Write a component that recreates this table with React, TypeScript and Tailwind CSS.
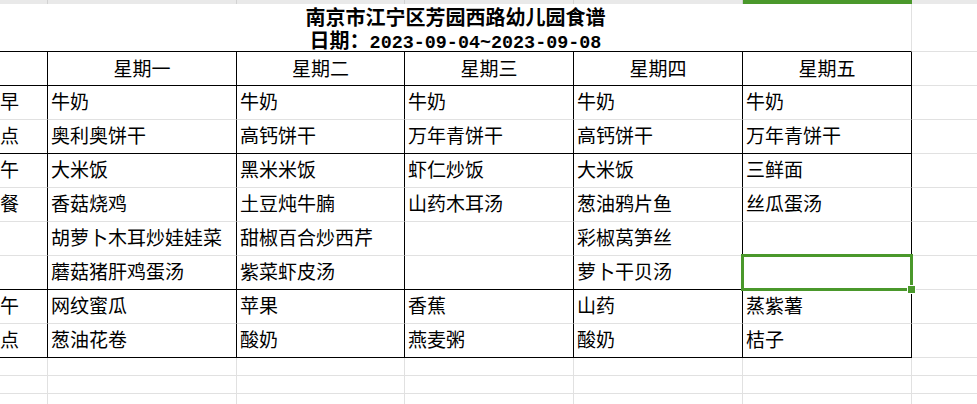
type Line = 'black' | 'gray';

const rightLine: Record<Line, string> = {
  black: 'border-r border-r-black',
  gray: 'border-r border-r-[#e1e1e1]',
};

const bottomLine: Record<Line, string> = {
  black: 'border-b border-b-black',
  gray: 'border-b border-b-[#e1e1e1]',
};

const days = ['星期一', '星期二', '星期三', '星期四', '星期五'];

const rows: { label: string; items: string[]; bottom: Line }[] = [
  { label: '早', items: ['牛奶', '牛奶', '牛奶', '牛奶', '牛奶'], bottom: 'gray' },
  { label: '点', items: ['奥利奥饼干', '高钙饼干', '万年青饼干', '高钙饼干', '万年青饼干'], bottom: 'black' },
  { label: '午', items: ['大米饭', '黑米米饭', '虾仁炒饭', '大米饭', '三鲜面'], bottom: 'gray' },
  { label: '餐', items: ['香菇烧鸡', '土豆炖牛腩', '山药木耳汤', '葱油鸦片鱼', '丝瓜蛋汤'], bottom: 'gray' },
  { label: '', items: ['胡萝卜木耳炒娃娃菜', '甜椒百合炒西芹', '', '彩椒莴笋丝', ''], bottom: 'gray' },
  { label: '', items: ['蘑菇猪肝鸡蛋汤', '紫菜虾皮汤', '', '萝卜干贝汤', ''], bottom: 'black' },
  { label: '午', items: ['网纹蜜瓜', '苹果', '香蕉', '山药', '蒸紫薯'], bottom: 'gray' },
  { label: '点', items: ['葱油花卷', '酸奶', '燕麦粥', '酸奶', '桔子'], bottom: 'black' },
];

// green cell cursor with the fill handle at its corner
function Selection() {
  return (
    <div className="absolute z-10 -left-[2px] -top-[2px] w-[172px] h-[37px] border-[3px] border-[#4a982b] pointer-events-none">
      <div className="absolute -right-[6px] -bottom-[6px] w-[9px] h-[9px] bg-[#4a982b] border border-white" />
    </div>
  );
}

export default function App() {
  return (
    <div className="h-[404px] w-[977px] overflow-hidden bg-white text-black font-['Noto_Sans_CJK_SC',sans-serif]">
      <div className="grid grid-cols-[48px_189px_168px_169px_169px_169px_1fr]">
        {/* column header strip, mostly scrolled away */}
        {[0, 1, 2, 3, 4].map((i) => (
          <div key={`h${i}`} className="h-[4px] bg-[#e9e9e9] border-r border-r-[#d2d2d2]" />
        ))}
        <div className="h-[4px] bg-[#4a982b]" />
        <div className="h-[4px] bg-[#e9e9e9]" />

        {/* title */}
        <div className={`col-span-6 h-[48px] pt-[1px] flex flex-col items-center font-bold text-[20px] leading-[23px] ${rightLine.gray} ${bottomLine.black}`}>
          <div>南京市江宁区芳园西路幼儿园食谱</div>
          <div>
            日期：<span className="font-['Liberation_Mono',monospace] text-[18.4px]">2023-09-04~2023-09-08</span>
          </div>
        </div>
        <div className={`h-[48px] ${bottomLine.gray}`} />

        {/* weekday header */}
        <div className={`h-[34px] ${rightLine.black} ${bottomLine.black}`} />
        {days.map((d) => (
          <div
            key={d}
            className={`h-[34px] flex items-center justify-center text-[19px] ${rightLine.black} ${bottomLine.black}`}
          >
            {d}
          </div>
        ))}
        <div className={`h-[34px] ${bottomLine.gray}`} />

        {/* menu rows */}
        {rows.map((row, r) => (
          <div key={r} className="contents">
            <div className={`h-[34px] flex items-center pb-[3px] text-[19px] ${rightLine.black} ${bottomLine[row.bottom]}`}>
              {row.label}
            </div>
            {row.items.map((item, c) => (
              <div
                key={c}
                className={`relative h-[34px] flex items-center pl-[3px] pb-[3px] text-[19px] whitespace-nowrap ${rightLine.black} ${bottomLine[row.bottom]}`}
              >
                {item}
                {r === 5 && c === 4 && <Selection />}
              </div>
            ))}
            <div className={`h-[34px] ${bottomLine.gray}`} />
          </div>
        ))}

        {/* empty sheet rows below the table */}
        {[0, 1, 2].map((r) => (
          <div key={`e${r}`} className="contents">
            {[0, 1, 2, 3, 4, 5].map((c) => (
              <div key={c} className={`h-[18px] ${rightLine.gray} ${bottomLine.gray}`} />
            ))}
            <div className={`h-[18px] ${bottomLine.gray}`} />
          </div>
        ))}
      </div>
    </div>
  );
}
